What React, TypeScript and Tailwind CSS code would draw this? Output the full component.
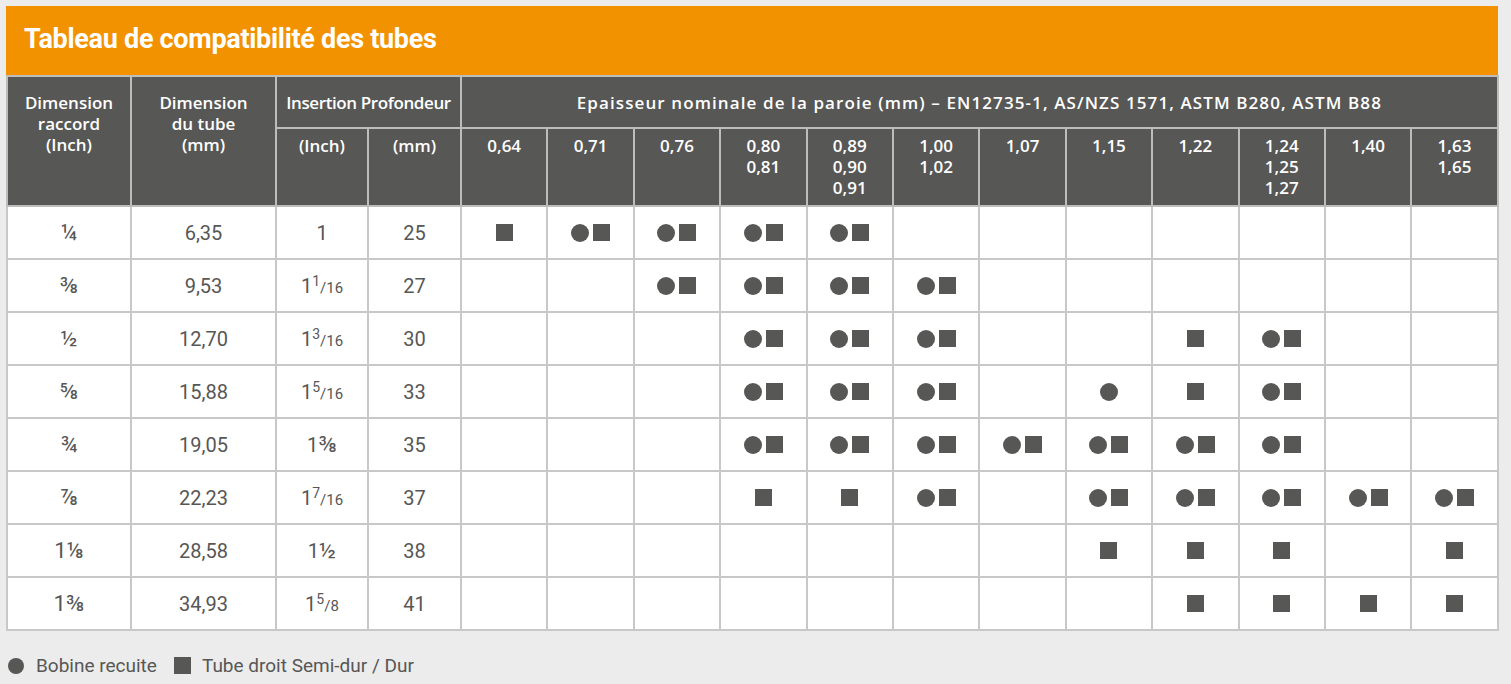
import React from "react";

type Mark = "" | "c" | "s" | "cs";

const THICK = [
  ["0,64"],
  ["0,71"],
  ["0,76"],
  ["0,80", "0,81"],
  ["0,89", "0,90", "0,91"],
  ["1,00", "1,02"],
  ["1,07"],
  ["1,15"],
  ["1,22"],
  ["1,24", "1,25", "1,27"],
  ["1,40"],
  ["1,63", "1,65"],
];

function Frac({ n, d }: { n: string; d: string }) {
  return (
    <span>
      <span className="relative -top-[7px] text-[14px]">{n}</span>
      <span className="text-[15px]">/</span>
      <span className="text-[15px]">{d}</span>
    </span>
  );
}

const ROWS: {
  raccord: React.ReactNode;
  tube: string;
  inch: React.ReactNode;
  mm: string;
  marks: Mark[];
}[] = [
  { raccord: "¼", tube: "6,35", inch: "1", mm: "25", marks: ["s", "cs", "cs", "cs", "cs", "", "", "", "", "", "", ""] },
  { raccord: "⅜", tube: "9,53", inch: <>1<Frac n="1" d="16" /></>, mm: "27", marks: ["", "", "cs", "cs", "cs", "cs", "", "", "", "", "", ""] },
  { raccord: "½", tube: "12,70", inch: <>1<Frac n="3" d="16" /></>, mm: "30", marks: ["", "", "", "cs", "cs", "cs", "", "", "s", "cs", "", ""] },
  { raccord: "⅝", tube: "15,88", inch: <>1<Frac n="5" d="16" /></>, mm: "33", marks: ["", "", "", "cs", "cs", "cs", "", "c", "s", "cs", "", ""] },
  { raccord: "¾", tube: "19,05", inch: <>1<span className="text-[22px]">⅜</span></>, mm: "35", marks: ["", "", "", "cs", "cs", "cs", "cs", "cs", "cs", "cs", "", ""] },
  { raccord: "⅞", tube: "22,23", inch: <>1<Frac n="7" d="16" /></>, mm: "37", marks: ["", "", "", "s", "s", "cs", "", "cs", "cs", "cs", "cs", "cs"] },
  { raccord: <>1<span className="text-[22px]">⅛</span></>, tube: "28,58", inch: <>1<span className="text-[22px]">½</span></>, mm: "38", marks: ["", "", "", "", "", "", "", "s", "s", "s", "", "s"] },
  { raccord: <>1<span className="text-[22px]">⅜</span></>, tube: "34,93", inch: <>1<Frac n="5" d="8" /></>, mm: "41", marks: ["", "", "", "", "", "", "", "", "s", "s", "s", "s"] },
];

function Dot() {
  return <span className="inline-block w-[18px] h-[18px] rounded-full bg-[#575756]" />;
}
function Sq() {
  return <span className="inline-block w-[17px] h-[17px] bg-[#575756]" />;
}

function MarkCell({ m }: { m: Mark }) {
  return (
    <div className="flex items-center justify-center gap-[4px]">
      {m.includes("c") && <Dot />}
      {m.includes("s") && <Sq />}
    </div>
  );
}

export default function App() {
  const th = "border-2 border-[#bdbdbd] bg-[#575756] text-white font-semibold align-top text-[17px] leading-[21px] font-['Open_Sans',sans-serif]";
  const td = "border-2 border-[#c8c8c8] bg-white text-center align-middle";
  return (
    <div
      className="min-h-screen bg-[#ececec] pt-[6px] pl-[6px]"
      style={{ fontFamily: "Roboto, 'Liberation Sans', sans-serif" }}
    >
      <div className="w-[1492px] h-[70px] bg-[#f39200] flex items-center pl-[18px]">
        <h1 className="text-white font-bold text-[27px] tracking-[-0.3px] leading-none -mt-[3px]">
          Tableau de compatibilité des tubes
        </h1>
      </div>
      <table className="border-collapse table-fixed w-[1491px] -mt-[1px]">
        <colgroup>
          <col className="w-[124px]" />
          <col className="w-[145px]" />
          <col className="w-[92px]" />
          <col className="w-[93px]" />
          {THICK.map((_, i) => (
            <col key={i} className="w-[86.4px]" />
          ))}
        </colgroup>
        <thead>
          <tr className="h-[52px]">
            <th rowSpan={2} className={`${th} pt-[15px]`}>
              Dimension
              <br />
              raccord
              <br />
              (Inch)
            </th>
            <th rowSpan={2} className={`${th} pt-[15px]`}>
              Dimension
              <br />
              du tube
              <br />
              (mm)
            </th>
            <th colSpan={2} className={`${th} !align-middle tracking-[-0.4px]`}>
              Insertion Profondeur
            </th>
            <th colSpan={12} className={`${th} !align-middle tracking-[1.1px]`}>
              Epaisseur nominale de la paroie (mm) – EN12735-1, AS/NZS 1571, ASTM B280, ASTM B88
            </th>
          </tr>
          <tr className="h-[78px]">
            <th className={`${th} pt-[6px]`}>(Inch)</th>
            <th className={`${th} pt-[6px]`}>(mm)</th>
            {THICK.map((vals, i) => (
              <th key={i} className={`${th} pt-[6px]`}>
                {vals.map((v) => (
                  <div key={v}>{v}</div>
                ))}
              </th>
            ))}
          </tr>
        </thead>
        <tbody className="text-[#575756]">
          {ROWS.map((r, i) => (
            <tr key={i} className="h-[53px]">
              <td className={`${td} text-[22px]`}>{r.raccord}</td>
              <td className={`${td} text-[20px]`}>{r.tube}</td>
              <td className={`${td} text-[20px]`}>{r.inch}</td>
              <td className={`${td} text-[20px]`}>{r.mm}</td>
              {r.marks.map((m, j) => (
                <td key={j} className={td}>
                  <MarkCell m={m} />
                </td>
              ))}
            </tr>
          ))}
        </tbody>
      </table>
      <div className="flex items-center mt-[25px] text-[19px] text-[#575756] leading-none">
        <span className="inline-block w-[16px] h-[16px] rounded-full bg-[#575756] ml-[2px]" />
        <span className="ml-[12px]">Bobine recuite</span>
        <span className="inline-block w-[17px] h-[17px] bg-[#575756] ml-[17px]" />
        <span className="ml-[11px]">Tube droit Semi-dur / Dur</span>
      </div>
    </div>
  );
}
